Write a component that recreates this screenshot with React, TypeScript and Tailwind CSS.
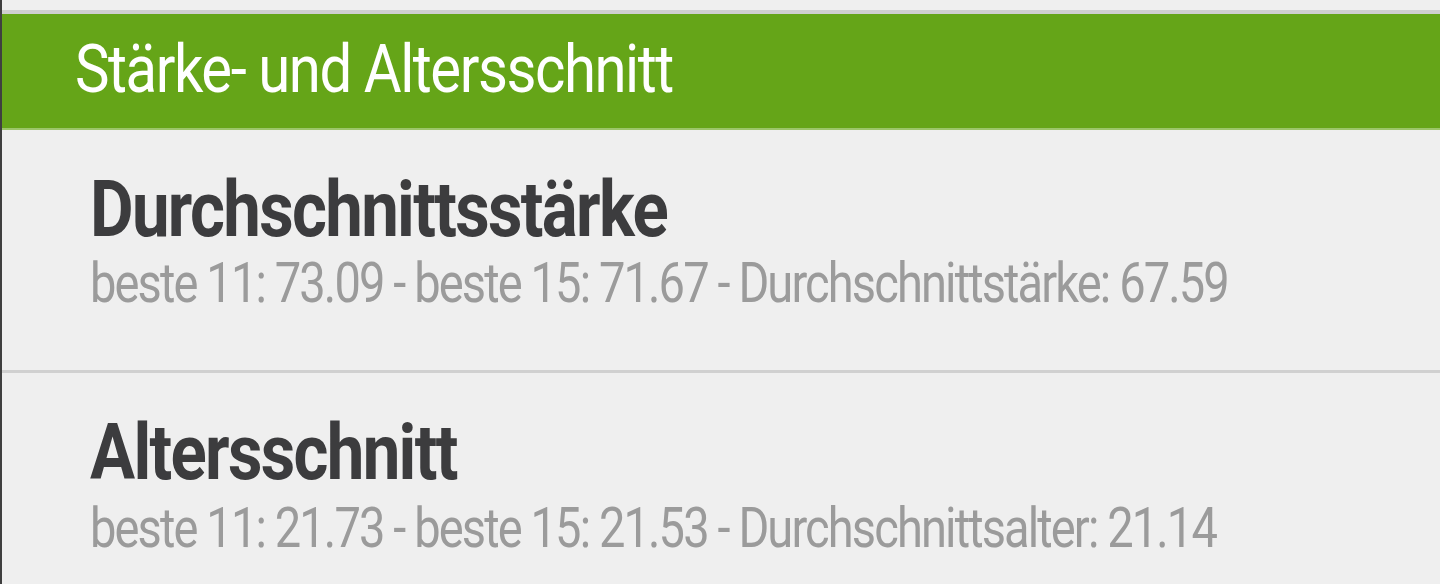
export default function App() {
  const font = { fontFamily: "Roboto, 'Noto Sans', sans-serif" };
  return (
    <div className="w-[1440px] h-[584px] overflow-hidden bg-[#efefef] flex" style={font}>
      <div className="w-[2px] bg-[#3f3f3f] shrink-0" />
      <div className="flex-1 flex flex-col">
        <div className="h-[10px] bg-[#efefef]" />
        <div className="h-[4px] bg-[#cfcfcf]" />
        <div className="h-[114px] bg-[#65a518] pl-[73px] pt-[23px] overflow-hidden">
          <span className="inline-block origin-left scale-x-[0.88] tracking-[-0.025em] text-[66px] leading-[66px] font-normal text-white whitespace-nowrap">
            Stärke- und Altersschnitt
          </span>
        </div>
        <div className="h-[2px] bg-[#9cc66a]" />
        <div className="h-[240px] pl-[88px] pt-[41px] flex flex-col items-start">
          <span className="inline-block origin-left scale-x-[0.86] tracking-[-0.025em] text-[78px] leading-[78px] font-bold text-[#3c3c3e] whitespace-nowrap">
            Durchschnittsstärke
          </span>
          <span className="mt-[6px] inline-block origin-left scale-x-[0.84] tracking-[-0.04em] text-[56px] leading-[56px] font-normal text-[#9b9b9b] whitespace-nowrap">
            beste 11: 73.09 - beste 15: 71.67 - Durchschnittstärke: 67.59
          </span>
        </div>
        <div className="h-[3px] bg-[#d0d0d0]" />
        <div className="flex-1 pl-[88px] pt-[41px] flex flex-col items-start">
          <span className="inline-block origin-left scale-x-[0.86] tracking-[-0.025em] text-[78px] leading-[78px] font-bold text-[#3c3c3e] whitespace-nowrap">
            Altersschnitt
          </span>
          <span className="mt-[8px] inline-block origin-left scale-x-[0.84] tracking-[-0.04em] text-[56px] leading-[56px] font-normal text-[#9b9b9b] whitespace-nowrap">
            beste 11: 21.73 - beste 15: 21.53 - Durchschnittsalter: 21.14
          </span>
        </div>
      </div>
    </div>
  );
}
